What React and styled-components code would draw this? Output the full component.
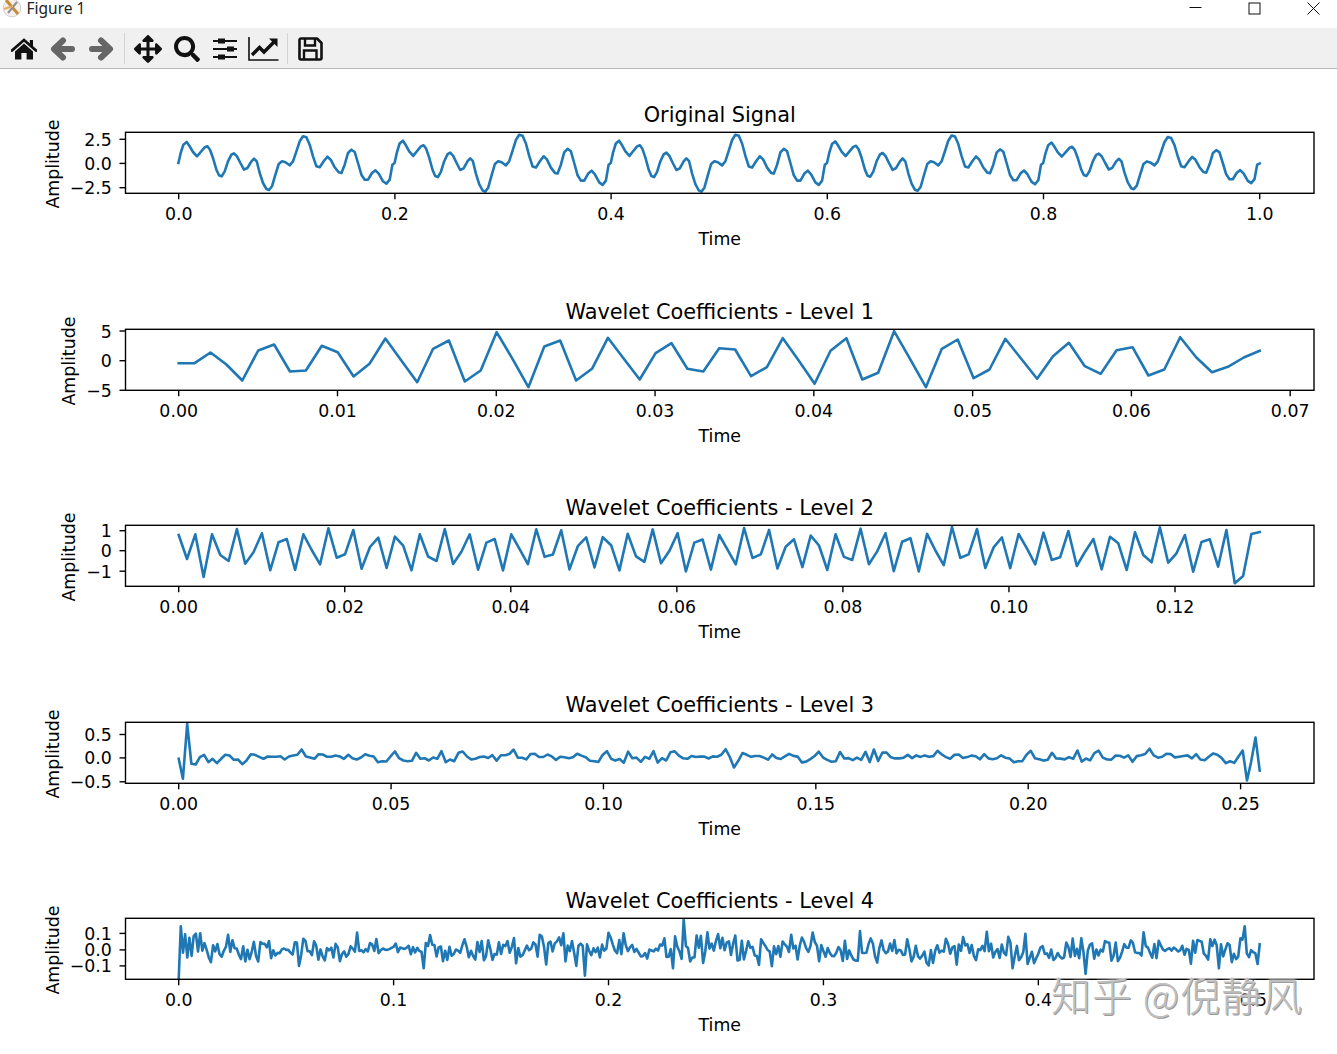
import React from "react";
import styled, { createGlobalStyle } from "styled-components";
import { FaArrowsAlt, FaSearch } from "react-icons/fa";

const Global = createGlobalStyle`
  html, body { margin: 0; padding: 0; background: #fff; overflow: hidden; }
  #root { width: 1337px; height: 1054px; }
`;

const Window = styled.div`
  position: relative;
  width: 1337px;
  height: 1054px;
  overflow: hidden;
  background: #fff;
  font-family: "DejaVu Sans", sans-serif;
`;
const TitleBar = styled.div`
  display: flex;
  align-items: center;
  height: 28px;
  padding-bottom: 10px;
  box-sizing: border-box;
  background: #fff;
`;
const AppIcon = styled.svg`
  width: 20px;
  height: 20px;
  margin-left: 1.5px;
  flex: none;
`;
const TitleText = styled.span`
  margin-left: 5px;
  margin-top: -2px;
  font: 15.5px/16px "Noto Sans", "Open Sans", sans-serif;
  color: #222;
`;
const Controls = styled.div`
  margin-left: auto;
  display: flex;
  align-items: center;
  padding-right: 17px;
  gap: 46px;
  margin-top: -2px;
`;
const ControlIcon = styled.svg`
  width: 13px;
  height: 13px;
  display: block;
`;
const Toolbar = styled.div`
  display: flex;
  align-items: center;
  height: 41px;
  box-sizing: border-box;
  padding-left: 5px;
  background: #f0f0f0;
  border-bottom: 1px solid #b9b9b9;
`;
const ToolButton = styled.div`
  width: 38.5px;
  height: 40px;
  box-sizing: border-box;
  padding-top: 2px;
  display: flex;
  align-items: center;
  justify-content: center;
  color: #111;
  font-size: ${(p) => p.$size || 26}px;
`;
const Separator = styled.div`
  width: 1px;
  height: 31px;
  margin: 0 4px 0 3.5px;
  background: #d4d4d4;
`;
const Canvas = styled.div`
  display: flex;
  flex-direction: column;
  background: #fff;
`;
const Plot = styled.svg`
  display: block;
  width: 1337px;
  height: 196.5px;
  flex: none;
`;
const Frame = styled.rect`
  fill: none;
  stroke: #000;
  stroke-width: 1.39;
`;
const Tick = styled.line`
  stroke: #000;
  stroke-width: 1.39;
`;
const Trace = styled.polyline`
  fill: none;
  stroke: #1f77b4;
  stroke-width: 2.6;
  stroke-linejoin: round;
  stroke-linecap: square;
`;
const Label = styled.text`
  font-family: "DejaVu Sans", sans-serif;
  font-size: ${(p) => p.$size || 17.36}px;
  fill: #000;
`;
const Watermark = styled.div`
  position: absolute;
  left: 1051px;
  top: 969px;
  white-space: nowrap;
  font: 300 40px/50px "Noto Sans CJK SC", sans-serif;
  letter-spacing: 1px;
  color: #c0c0c0;
  text-shadow: 1px 1px 0 #9a9a9a, 0 0 2px #fff, 0 0 4px #fff;
`;

function rng(seed) {
  let a = seed;
  return () => {
    a |= 0; a = (a + 0x6d2b79f5) | 0;
    let t = Math.imul(a ^ (a >>> 15), 1 | a);
    t = (t + Math.imul(t ^ (t >>> 7), 61 | t)) ^ t;
    return ((t ^ (t >>> 14)) >>> 0) / 4294967296;
  };
}
const gauss = (r) => (r() + r() + r() + r() - 2) * 1.73;

const X0 = 178.7;
const X1 = 1259.7;

// Signal: one 0.2 s period traced as [x, y], repeated five times.
const PERIOD = [[11,105],[18,75],[26,50],[36,42],[45,55],[55,72],[67,85],[78,72],[90,58],[98,55],[106,65],[115,90],[125,125],[133,142],[141,145],[150,130],[160,100],[170,80],[178,76],[187,85],[197,105],[208,125],[218,120],[230,100],[238,92],[246,100],[255,135],[265,165],[275,183],[283,186],[292,175],[302,140],[312,108],[322,100],[332,103],[345,112],[355,100],[365,70],[375,40],[385,25],[395,28],[405,50],[415,85],[425,115],[435,118],[447,100],[458,86],[468,95],[480,118],[492,133],[500,135],[510,110],[520,75],[530,65],[540,72],[550,105],[560,140],[570,155],[580,155],[592,135],[602,127],[612,137],[625,160],[635,167],[645,155],[653,110]];
const signal = () => {
  const out = [];
  const gains = [1, 1.06, 1.06, 1.03, 0.97];
  gains.forEach((g, p) => {
    PERIOD.forEach(([zx, zy]) => {
      const y = 128 + zy / 3;
      out.push([175 + zx / 3 + 216.2 * p - 0.3, 163.4 + (y - 163.4) * g]);
    });
  });
  out.push([X1, 163.4]);
  return out;
};

const L1 = [362.7,362.7,352,364,380,350,344,371,370,345.3,351.7,376,363.3,338,360,381.7,348.3,340,381,370,331.7,358.3,386.7,346,340,380,368.3,337.3,358.3,379,352.7,342.7,368.3,371,347.7,349,375.7,366.7,337.7,360,383.3,350.3,337.7,379,372.3,330.7,358.3,386.7,348.3,339,377.7,369,338.3,358.3,378.3,355.7,342.3,365.7,373.3,349.7,346.7,375,369,336.7,356.7,371.7,366.3,357,350.3];
const even = (ys) => ys.map((y, k) => [X0 + ((X1 - X0) * k) / (ys.length - 1), y]);

const L2_HEAD = [120,192,118,246,118,180,198,102,206,172,115,226,142,132,225,118,165,208,100,188,178,105,221,156,128,219,125,152,226,118,185,198,102,207,170,118,224];
const L2_TAIL = [42,85,133,38,120,112,33,138,95,57,148,50,70,150,37,105,127,22,128,100,45,155,66,58,140,30,190,168,42,36];
const level2 = () => {
  const r = rng(11);
  const ys = [];
  for (let k = 0; k <= 130; k++) {
    let z;
    if (k <= 36) z = L2_HEAD[k];
    else if (k >= 101) z = L2_TAIL[k - 101] + 75;
    else z = L2_HEAD[7 + ((k - 7) % 25)] + gauss(r) * 2;
    ys.push(495 + z / 3);
  }
  return even(ys);
};

const L3_HEAD = [190,250,85,205,207,185,178,200,190,203,190,178,180,193,192,206,195,176,178,184,190,183,184,184,182,192,183,180,178,162,183,186,190,176,177,184,184,180,183,190,178,188,192,186,176,181,183,200,197,198,182,168,188,195,197,196,172,190,188,195,186,190,167,200,192,197,172,168,183,192,190];
const level3 = () => {
  const r = rng(5);
  const ys = [];
  for (let k = 0; k < 256; k++) {
    let y;
    if (k < L3_HEAD.length) y = 695 + L3_HEAD[k] / 3;
    else y = 695 + (L3_HEAD[20 + ((k - 20) % 50)] + gauss(r) * 3) / 3;
    ys.push(y);
  }
  const fix = { 131: 767, 164: 749, 212: 750, 250: 756, 251: 750, 252: 780, 253: 761, 254: 737, 255: 770 };
  Object.entries(fix).forEach(([k, y]) => (ys[k] = y));
  return even(ys);
};

const level4 = () => {
  const r = rng(23);
  const ys = [];
  for (let k = 0; k < 504; k++) {
    const quiet = (k > 92 && k < 112) || (k > 456 && k < 470);
    const v = gauss(r) * (quiet ? 0.012 : 0.046) + (k % 2 ? 0.006 : -0.006);
    ys.push(Math.max(-0.115, Math.min(0.11, v)));
  }
  const fix = { 0: -0.18, 1: 0.14, 2: -0.02, 3: 0.09, 4: -0.05, 5: 0.07, 6: -0.04, 7: 0.08, 189: -0.16, 190: 0.03, 235: 0.18, 236: 0.02, 422: -0.15, 496: 0.14, 502: -0.09, 503: 0.03 };
  Object.entries(fix).forEach(([k, v]) => (ys[k] = v));
  return even(ys.map((v) => 949.3 - 165 * v));
};

const PANELS = [
  { title: "Original Signal", labelX: 59.3, xMax: 1, xTicks: [["0.0",0],["0.2",0.2],["0.4",0.4],["0.6",0.6],["0.8",0.8],["1.0",1]], yTicks: [["2.5",139.3],["0.0",163.4],["−2.5",187.7]], points: signal() },
  { title: "Wavelet Coefficients - Level 1", labelX: 75, xMax: 0.06808, xTicks: [["0.00",0],["0.01",0.01],["0.02",0.02],["0.03",0.03],["0.04",0.04],["0.05",0.05],["0.06",0.06],["0.07",0.07]], yTicks: [["5",330.5],["0",360.2],["−5",389.8]], points: even(L1) },
  { title: "Wavelet Coefficients - Level 2", labelX: 75, xMax: 0.1302, xTicks: [["0.00",0],["0.02",0.02],["0.04",0.04],["0.06",0.06],["0.08",0.08],["0.10",0.1],["0.12",0.12]], yTicks: [["1",530.7],["0",550.7],["−1",571.2]], points: level2() },
  { title: "Wavelet Coefficients - Level 3", labelX: 59.3, xMax: 0.2545, xTicks: [["0.00",0],["0.05",0.05],["0.10",0.1],["0.15",0.15],["0.20",0.2],["0.25",0.25]], yTicks: [["0.5",734],["0.0",757.4],["−0.5",781.3]], points: level3() },
  { title: "Wavelet Coefficients - Level 4", labelX: 59.3, xMax: 0.503, xTicks: [["0.0",0],["0.1",0.1],["0.2",0.2],["0.3",0.3],["0.4",0.4],["0.5",0.5]], yTicks: [["0.1",933.4],["0.0",949.9],["−0.1",965.9]], points: level4() },
];

const L = 125.5;
const R = 1314;
const CX = (L + R) / 2;

function Panel({ index, panel }) {
  const top = 69 + 196.5 * index;
  const axTop = 132.3 + 196.5 * index;
  const axBot = axTop + 61;
  const xOf = (v) => X0 + ((X1 - X0) * v) / panel.xMax;
  return (
    <Plot viewBox={`0 ${top} 1337 196.5`}>
      <Label $size={20.83} x={CX} y={axTop - 10.8} textAnchor="middle">{panel.title}</Label>
      <Trace points={panel.points.map(([x, y]) => `${x.toFixed(1)},${y.toFixed(1)}`).join(" ")} />
      <Frame x={L} y={axTop} width={R - L} height={61} />
      {panel.xTicks.map(([t, v]) => (
        <g key={t}>
          <Tick x1={xOf(v)} x2={xOf(v)} y1={axBot} y2={axBot + 6} />
          <Label x={xOf(v)} y={axBot + 26.4} textAnchor="middle">{t}</Label>
        </g>
      ))}
      {panel.yTicks.map(([t, y]) => (
        <g key={t}>
          <Tick x1={L - 6} x2={L} y1={y} y2={y} />
          <Label x={111.8} y={y + 6.5} textAnchor="end">{t}</Label>
        </g>
      ))}
      <Label x={CX} y={axBot + 51.5} textAnchor="middle">Time</Label>
      <Label x={panel.labelX} y={axTop + 31.8} textAnchor="middle" transform={`rotate(-90 ${panel.labelX} ${axTop + 31.8})`}>Amplitude</Label>
    </Plot>
  );
}

export default function App() {
  return (
    <Window>
      <Global />
      <TitleBar>
        <AppIcon viewBox="0 0 20 20">
          <circle cx="10" cy="9" r="8.8" fill="#f6f1ea" stroke="#d3cdd9" strokeWidth="1" />
          <path d="M4 1 L16 15" stroke="#c98a3c" strokeWidth="3" />
          <path d="M15 3 L6 14" stroke="#8f8f8f" strokeWidth="2" />
          <path d="M2 10 L11 7" stroke="#e6ad66" strokeWidth="2" />
        </AppIcon>
        <TitleText>Figure 1</TitleText>
        <Controls>
          <ControlIcon viewBox="0 0 13 13"><path d="M0.5 5.5H12.5" stroke="#111" strokeWidth="1" /></ControlIcon>
          <ControlIcon viewBox="0 0 13 13"><rect x="1" y="1" width="11" height="11" fill="none" stroke="#111" strokeWidth="1" /></ControlIcon>
          <ControlIcon viewBox="0 0 13 13"><path d="M0.5 0.5L12.5 12.5M12.5 0.5L0.5 12.5" stroke="#111" strokeWidth="1" /></ControlIcon>
        </Controls>
      </TitleBar>
      <Toolbar>
        <ToolButton>
          <svg width="26" height="22" viewBox="0 0 26 22">
            <path d="M1 12.5L13 2L25 12.5" fill="none" stroke="#111" strokeWidth="2.8" strokeLinecap="round" strokeLinejoin="miter" />
            <path d="M13 5.6L22 13.4V21.5H15.6V15H10.4V21.5H4V13.4Z" fill="#111" />
            <rect x="18.8" y="2" width="3.2" height="6" fill="#111" />
          </svg>
        </ToolButton>
        <ToolButton>
          <svg width="25" height="24" viewBox="0 0 25 24">
            <path d="M22 12H5M13 3.5L4 12L13 20.5" fill="none" stroke="#666" strokeWidth="6" strokeLinecap="round" strokeLinejoin="round" />
          </svg>
        </ToolButton>
        <ToolButton>
          <svg width="25" height="24" viewBox="0 0 25 24">
            <path d="M3 12H20M12 3.5L21 12L12 20.5" fill="none" stroke="#666" strokeWidth="6" strokeLinecap="round" strokeLinejoin="round" />
          </svg>
        </ToolButton>
        <Separator />
        <ToolButton $size={28}><FaArrowsAlt /></ToolButton>
        <ToolButton $size={26}><FaSearch /></ToolButton>
        <ToolButton>
          <svg width="26" height="24" viewBox="0 0 26 24">
            <path d="M1 4H25M1 12H25M1 20H25" stroke="#111" strokeWidth="1.8" />
            <rect x="6" y="1.5" width="7" height="5" fill="#111" />
            <rect x="15" y="9.5" width="7" height="5" fill="#111" />
            <rect x="6" y="17.5" width="7" height="5" fill="#111" />
          </svg>
        </ToolButton>
        <ToolButton>
          <svg width="31" height="24" viewBox="0 0 31 24">
            <path d="M1 0V23H30.5" fill="none" stroke="#111" strokeWidth="1.6" />
            <path d="M4 18L11.5 10.5L16 15L26 5" fill="none" stroke="#111" strokeWidth="3.4" />
            <path d="M21 1.5H29.5V10Z" fill="#111" />
          </svg>
        </ToolButton>
        <Separator />
        <ToolButton>
          <svg width="25" height="24" viewBox="0 0 25 24">
            <path d="M3 1.5H19L23.5 6V21A1.5 1.5 0 0 1 22 22.5H3A1.5 1.5 0 0 1 1.5 21V3A1.5 1.5 0 0 1 3 1.5Z" fill="none" stroke="#111" strokeWidth="2.6" strokeLinejoin="round" />
            <path d="M7 2V8.5H17V2" fill="none" stroke="#111" strokeWidth="2.4" />
            <path d="M6 22V13.5H18.5V22" fill="none" stroke="#111" strokeWidth="2.4" />
          </svg>
        </ToolButton>
      </Toolbar>
      <Canvas>
        {PANELS.map((p, i) => (
          <Panel key={p.title} index={i} panel={p} />
        ))}
      </Canvas>
      <Watermark>知乎 @倪静风</Watermark>
    </Window>
  );
}
